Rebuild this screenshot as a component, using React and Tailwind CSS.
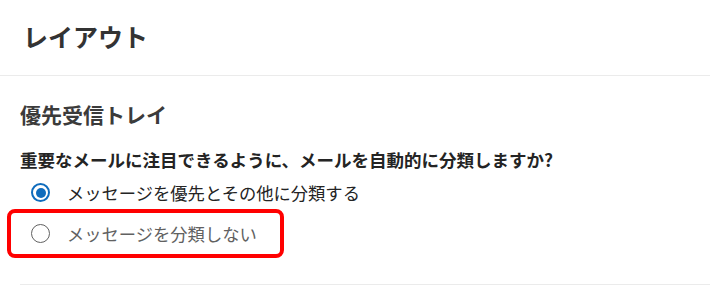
import React from "react";

function Radio({ checked }) {
  return checked ? (
    <span className="flex h-[19px] w-[19px] shrink-0 items-center justify-center rounded-full border-2 border-[#0f6cbd]">
      <span className="h-[10px] w-[10px] rounded-full bg-[#0f6cbd]" />
    </span>
  ) : (
    <span className="h-[19px] w-[19px] shrink-0 rounded-full border border-[#616161]" />
  );
}

export default function App() {
  return (
    <div className="h-[286px] w-[710px] overflow-hidden bg-white font-['Noto_Sans_CJK_JP',sans-serif]">
      <div className="flex h-[76px] items-center border-b border-[#ebebeb] pl-[23px] pb-[2px]">
        <h1 className="text-[25px] font-bold leading-none text-[#333333]">レイアウト</h1>
      </div>
      <div className="pl-5">
        <h2 className="mt-[24px] text-[21px] font-bold leading-[28px] text-[#3b3b3b]">優先受信トレイ</h2>
        <p className="mt-[20px] text-[17.5px] font-bold leading-[24px] text-[#242424]">
          重要なメールに注目できるように、メールを自動的に分類しますか?
        </p>
        <div className="flex h-[41px] items-center gap-[17px] pl-[11px]">
          <Radio checked />
          <span className="text-[17.3px] text-[#242424]">メッセージを優先とその他に分類する</span>
        </div>
        <div className="relative flex h-[41px] items-center gap-[17px] pl-[11px]">
          <Radio />
          <span className="text-[17.3px] text-[#616161]">メッセージを分類しない</span>
          <div className="absolute left-[-13px] top-[-4px] h-[49px] w-[277px] rounded-[8px] border-[4px] border-[#ff0000]" />
        </div>
        <div className="mt-[30px] border-t border-[#ebebeb]" />
      </div>
    </div>
  );
}
